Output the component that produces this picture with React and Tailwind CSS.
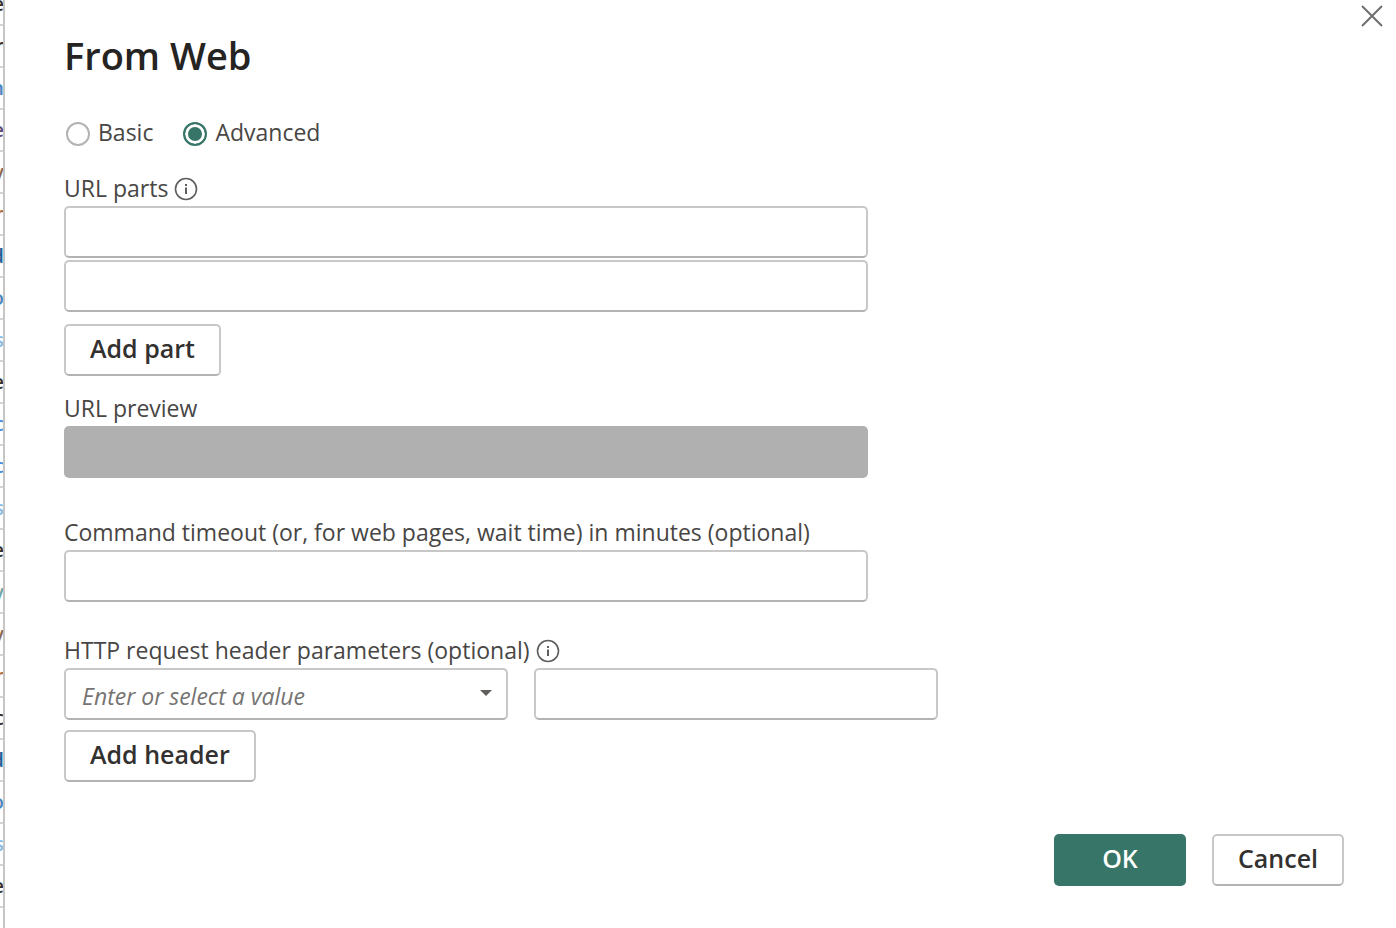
import React, { useState } from "react";

const fieldClass =
  "block h-[52px] rounded-[5px] border-2 border-[#c8c8c8] border-b-[#b3b3b3] bg-white px-4 text-[23px] focus:outline-none focus:border-[#367567]";

const buttonClass =
  "h-[52px] rounded-[5px] border-2 border-[#c8c8c8] border-b-[#b3b3b3] bg-white text-[25px] leading-8 pb-1 font-semibold text-[#323130] hover:bg-gray-50";

// Last letters of the table cells that stick out beside the dialog
const rows = [
  { text: "e", color: "text-[#323130]" },
  { text: "r", color: "text-[#323130]" },
  { text: "n", color: "text-[#4a86c0]" },
  { text: "e", color: "text-[#5b4a78]" },
  { text: "y", color: "text-[#8a6a50]" },
  { text: "r", color: "text-[#b07040]" },
  { text: "d", color: "text-[#1f5f95]" },
  { text: "o", color: "text-[#4a86c0]" },
  { text: "s", color: "text-[#8abbe0]" },
  { text: "e", color: "text-[#323130]" },
  { text: "c", color: "text-[#4a90e0]" },
  { text: "c", color: "text-[#4a90e0]" },
  { text: "s", color: "text-[#8abbe0]" },
  { text: "e", color: "text-[#323130]" },
  { text: "y", color: "text-[#6fa5a8]" },
  { text: "y", color: "text-[#8a6a50]" },
  { text: "r", color: "text-[#b07040]" },
  { text: "c", color: "text-[#323130]" },
  { text: "d", color: "text-[#1f5f95]" },
  { text: "o", color: "text-[#4a86c0]" },
  { text: "s", color: "text-[#8abbe0]" },
  { text: "e", color: "text-[#323130]" },
];

const InfoIcon = () => (
  <svg
    viewBox="0 0 24 24"
    className="mt-[2px] size-6 shrink-0"
    fill="none"
    stroke="#605e5c"
    aria-hidden="true"
  >
    <circle cx="12" cy="12" r="10.5" strokeWidth="1.6" />
    <path d="M12 10.5v6.5" strokeWidth="2" />
    <path d="M12 7v2" strokeWidth="2" />
  </svg>
);

const RadioOption = ({ id, label, checked, onChange }) => (
  <div className="flex items-center gap-2">
    <input
      type="radio"
      id={id}
      name="mode"
      checked={checked}
      onChange={onChange}
      className="mt-1 size-6 appearance-none rounded-full border-2 border-[#b3b3b3] bg-white checked:border-[#367567] checked:bg-[#367567] checked:shadow-[inset_0_0_0_3px_white]"
    />
    <label htmlFor={id}>{label}</label>
  </div>
);

const App = () => {
  const [mode, setMode] = useState("advanced");

  return (
    <div className="flex min-h-screen bg-white font-['Open_Sans','Noto_Sans',sans-serif] text-[23px] leading-8 text-[#484644]">
      <div
        aria-hidden="true"
        className="relative w-[5px] shrink-0 overflow-hidden border-r-2 border-[#c8c6c4]"
      >
        <div className="absolute -right-px top-0 -mt-4">
          {rows.map((row, index) => (
            <div
              key={index}
              className={`flex h-[42px] w-10 items-center justify-end border-b-2 border-[#d6d4d2] text-xl font-semibold ${row.color}`}
            >
              {row.text}
            </div>
          ))}
        </div>
      </div>

      <form
        className="relative flex grow flex-col pb-10 pl-[59px] pr-[52px] pt-8"
        onSubmit={(e) => e.preventDefault()}
      >
        <button
          type="button"
          aria-label="Close"
          className="absolute right-3 top-1"
        >
          <svg
            viewBox="0 0 24 24"
            className="size-6"
            stroke="#706e6c"
            strokeWidth="2"
            aria-hidden="true"
          >
            <path d="M2 2l20 20M22 2L2 22" />
          </svg>
        </button>

        <h1 className="text-[38px] font-semibold leading-[46px] text-[#252423]">
          From Web
        </h1>

        <div className="mt-[38px] flex gap-[30px] pl-[2px]">
          <RadioOption
            id="basic"
            label="Basic"
            checked={mode === "basic"}
            onChange={() => setMode("basic")}
          />
          <RadioOption
            id="advanced"
            label="Advanced"
            checked={mode === "advanced"}
            onChange={() => setMode("advanced")}
          />
        </div>

        <div className="mt-6 flex items-center gap-[6px]">
          <label htmlFor="part1">URL parts</label>
          <InfoIcon />
        </div>
        <div className="mt-[2px] flex max-w-[804px] flex-col gap-[2px]">
          <input id="part1" type="text" className={fieldClass} />
          <input
            type="text"
            aria-label="URL part 2"
            className={fieldClass}
          />
        </div>
        <button type="button" className={`mt-3 self-start px-6 ${buttonClass}`}>
          Add part
        </button>

        <label htmlFor="preview" className="mt-4">
          URL preview
        </label>
        <input
          id="preview"
          type="text"
          readOnly
          className="mt-[2px] h-[52px] w-full max-w-[804px] rounded-[5px] bg-[#b0b0b0] px-4"
        />

        <label htmlFor="timeout" className="mt-[38px]">
          Command timeout (or, for web pages, wait time) in minutes (optional)
        </label>
        <input
          id="timeout"
          type="text"
          className={`mt-[2px] w-full max-w-[804px] ${fieldClass}`}
        />

        <div className="mt-8 flex items-center gap-[6px]">
          <label htmlFor="header">
            HTTP request header parameters (optional)
          </label>
          <InfoIcon />
        </div>
        <div className="mt-[2px] flex max-w-[874px] gap-[26px]">
          <div className="relative w-[444px]">
            <select
              id="header"
              defaultValue=""
              className={`w-full appearance-none pt-1 italic text-[#767472] ${fieldClass}`}
            >
              <option value="">Enter or select a value</option>
              <option>Accept</option>
              <option>Content-Type</option>
            </select>
            <svg
              viewBox="0 0 12 6"
              className="pointer-events-none absolute right-4 top-[22px] h-[6px] w-3"
              fill="#605e5c"
              aria-hidden="true"
            >
              <path d="M0 0h12L6 6z" />
            </svg>
          </div>
          <input
            type="text"
            aria-label="Header value"
            className={`min-w-0 grow ${fieldClass}`}
          />
        </div>
        <button
          type="button"
          className={`mt-[10px] self-start px-6 ${buttonClass}`}
        >
          Add header
        </button>

        <div className="mt-[52px] flex justify-end gap-[26px]">
          <button
            type="submit"
            className="h-[52px] w-[132px] rounded-[5px] bg-[#367567] pb-1 text-[25px] font-semibold leading-8 text-white"
          >
            OK
          </button>
          <button type="button" className={`w-[132px] ${buttonClass}`}>
            Cancel
          </button>
        </div>
      </form>
    </div>
  );
};

export default App;
